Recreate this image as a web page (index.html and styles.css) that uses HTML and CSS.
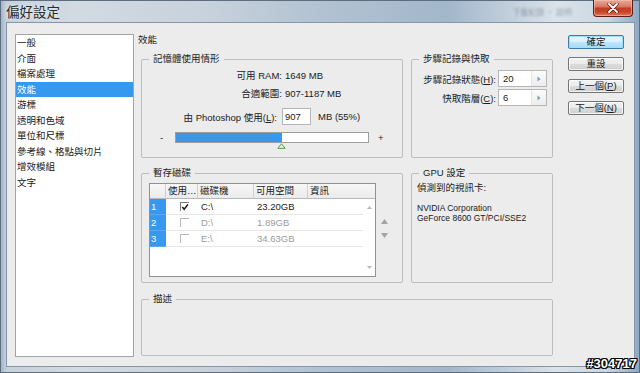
FILE: index.html
```html
<!DOCTYPE html>
<html lang="zh-Hant">
<head>
<meta charset="utf-8">
<title>偏好設定</title>
<link rel="stylesheet" href="styles.css">
</head>
<body>
<div class="window">
  <div class="titlebar">
    <span class="title">偏好設定</span>
    <span class="ghost">下載紀錄 · 說明</span>
    <button class="close" aria-label="關閉">
      <svg width="12" height="10" viewBox="0 0 12 10"><path d="M2 1 L10 9 M10 1 L2 9" stroke="#5a1a12" stroke-width="3.2" stroke-linecap="round"/><path d="M2 1 L10 9 M10 1 L2 9" stroke="#fff" stroke-width="1.8" stroke-linecap="round"/></svg>
    </button>
  </div>

  <div class="client">
    <ul class="sidebar">
      <li>一般</li>
      <li>介面</li>
      <li>檔案處理</li>
      <li class="selected">效能</li>
      <li>游標</li>
      <li>透明和色域</li>
      <li>單位和尺標</li>
      <li>參考線、格點與切片</li>
      <li>增效模組</li>
      <li>文字</li>
    </ul>

    <main class="content">
      <h1 class="page-title">效能</h1>

      <div class="row row-top">
        <section class="group group-memory">
          <span class="legend">記憶體使用情形</span>
          <div class="mem-row mem-first">
            <span class="mem-label">可用 RAM:</span>
            <span class="mem-value">1649 MB</span>
          </div>
          <div class="mem-row">
            <span class="mem-label">合適範圍:</span>
            <span class="mem-value">907-1187 MB</span>
          </div>
          <div class="mem-row mem-input-row">
            <span class="mem-label mem-label-input">由 Photoshop 使用(<u>L</u>):</span>
            <span class="field">907</span>
            <span class="unit">MB (55%)</span>
          </div>
          <div class="slider-row">
            <span class="minus">-</span>
            <div class="slider">
              <div class="fill" style="width:55%"></div>
              <svg class="thumb" width="9" height="6" viewBox="0 0 9 6"><path d="M4.5 0.8 L8.2 5.4 L0.8 5.4 Z" fill="#e3efe0" stroke="#5f9a55" stroke-width="1"/></svg>
            </div>
            <span class="plus">+</span>
          </div>
        </section>

        <section class="group group-history">
          <span class="legend">步驟記錄與快取</span>
          <div class="hist-row hist-first">
            <span class="hist-label">步驟記錄狀態(<u>H</u>):</span>
            <span class="spin"><span class="spin-val">20</span><span class="spin-btn"><svg width="4" height="6" viewBox="0 0 4 6"><path d="M0.5 0.5 L3.5 3 L0.5 5.5 Z" fill="#7d9bbb"/></svg></span></span>
          </div>
          <div class="hist-row">
            <span class="hist-label">快取階層(<u>C</u>):</span>
            <span class="spin"><span class="spin-val">6</span><span class="spin-btn"><svg width="4" height="6" viewBox="0 0 4 6"><path d="M0.5 0.5 L3.5 3 L0.5 5.5 Z" fill="#7d9bbb"/></svg></span></span>
          </div>
        </section>
      </div>

      <div class="row row-mid">
        <section class="group group-scratch">
          <span class="legend">暫存磁碟</span>
          <div class="scratch-body">
            <div class="disk-table">
              <div class="th"></div>
              <div class="th">使用…</div>
              <div class="th">磁碟機</div>
              <div class="th">可用空間</div>
              <div class="th th-last">資訊</div>

              <div class="td num">1</div>
              <div class="td use"><span class="cb cb-on"><svg width="9" height="8" viewBox="0 0 9 8"><path d="M1.5 4 L3.6 6.6 L7.8 1" fill="none" stroke="#1a1a1a" stroke-width="1.7"/></svg></span></div>
              <div class="td">C:\</div>
              <div class="td">23.20GB</div>
              <div class="td"></div>

              <div class="td num">2</div>
              <div class="td use"><span class="cb"></span></div>
              <div class="td off">D:\</div>
              <div class="td off">1.89GB</div>
              <div class="td"></div>

              <div class="td num">3</div>
              <div class="td use"><span class="cb"></span></div>
              <div class="td off">E:\</div>
              <div class="td off">34.63GB</div>
              <div class="td"></div>

              <div class="filler"></div>
              <div class="scroll">
                <svg width="5" height="3" viewBox="0 0 5 3"><path d="M2.5 0 L5 3 L0 3 Z" fill="#b9b9b9"/></svg>
                <svg width="5" height="3" viewBox="0 0 5 3"><path d="M0 0 L5 0 L2.5 3 Z" fill="#b9b9b9"/></svg>
              </div>
            </div>
            <div class="order-arrows">
              <svg width="7" height="5" viewBox="0 0 7 5"><path d="M3.5 0 L7 5 L0 5 Z" fill="#a3a3a3"/></svg>
              <svg width="7" height="5" viewBox="0 0 7 5"><path d="M0 0 L7 0 L3.5 5 Z" fill="#a3a3a3"/></svg>
            </div>
          </div>
        </section>

        <section class="group group-gpu">
          <span class="legend">GPU 設定</span>
          <p class="gpu-title">偵測到的視訊卡:</p>
          <p class="gpu-info">NVIDIA Corporation<br>GeForce 8600 GT/PCI/SSE2</p>
        </section>
      </div>

      <section class="group group-desc">
        <span class="legend">描述</span>
      </section>
    </main>

    <div class="buttons">
      <button class="btn btn-default">確定</button>
      <button class="btn">重設</button>
      <button class="btn">上一個(<u>P</u>)</button>
      <button class="btn">下一個(<u>N</u>)</button>
    </div>
  </div>

  <div class="watermark">#304717</div>
</div>
</body>
</html>
```

FILE: styles.css
```css
* { box-sizing: border-box; }

html, body {
  margin: 0;
  padding: 0;
}

body {
  width: 640px;
  height: 373px;
  overflow: hidden;
  font-family: "Liberation Sans", "Noto Sans CJK TC", sans-serif;
  font-size: 9.5px;
  color: #1a1a1a;
  background: #8fa3b8;
}

.window {
  position: relative;
  width: 640px;
  height: 373px;
  display: flex;
  flex-direction: column;
  background: linear-gradient(90deg, #9fb1c3 0, #c6d1dc 1%, #d2dae2 12%, #c8d2dc 32%, #b2c2d2 50%, #a3b7cb 70%, #c3d0dc 80%, #dae3ea 87%, #cbd6e0 95%, #8ca7c2 100%);
  box-shadow: inset 0 0 0 1px #5d6e80;
}

/* ---------- title bar ---------- */
.titlebar {
  flex: none;
  height: 23px;
  display: flex;
  align-items: flex-start;
}

.title {
  margin: 2px 0 0 6px;
  font-family: "Noto Sans CJK TC", sans-serif;
  font-size: 13.5px;
  line-height: 18px;
  color: #2a2a2a;
  text-shadow: 0 0 5px rgba(255, 255, 255, 0.9);
}

.ghost {
  margin: 7px 21px 0 auto;
  font-family: "Noto Sans CJK TC", sans-serif;
  font-size: 8px;
  line-height: 10px;
  color: rgba(70, 85, 100, 0.45);
  filter: blur(1px);
}

.close {
  width: 40px;
  height: 17px;
  margin: 0 7px 0 0;
  padding: 0;
  border: 1px solid #5a1f17;
  border-top: none;
  border-radius: 0 0 4px 4px;
  background: linear-gradient(#e9a897 0, #d87b66 40%, #c13d24 52%, #c7452b 75%, #e07a58 100%);
  box-shadow: inset 0 0 0 1px rgba(255, 200, 180, 0.55);
  display: flex;
  align-items: center;
  justify-content: center;
}

/* ---------- client area ---------- */
.client {
  flex: 1;
  margin: 0 6px 7px 7px;
  padding: 11px 10px 9px 8px;
  background: #ececec;
  display: flex;
  box-shadow: 0 0 0 1px #8396aa;
}

.sidebar {
  flex: none;
  width: 119px;
  margin: 0;
  padding: 0;
  list-style: none;
  background: #fff;
  border: 1px solid #a3a3a3;
}

.sidebar li {
  height: 15.5px;
  line-height: 15.5px;
  padding-left: 1px;
  white-space: nowrap;
}

.sidebar .selected {
  background: #3798f0;
  color: #fff;
}

.content {
  flex: none;
  width: 415px;
  margin-left: 4px;
  display: flex;
  flex-direction: column;
}

.page-title {
  margin: 0;
  height: 12px;
  font-size: 9.5px;
  font-weight: normal;
  line-height: 12px;
}

.row {
  display: flex;
  gap: 8px;
  margin-left: 3px;
}

.row-top { margin-top: 13px; }
.row-mid { margin-top: 15px; }

/* ---------- group boxes ---------- */
.group {
  border: 1px solid #bdbdbd;
  border-radius: 2px;
}

.legend {
  display: block;
  width: max-content;
  margin: -7px 0 0 7px;
  padding: 0 4px;
  line-height: 12px;
  background: #ececec;
  white-space: nowrap;
}

.group-memory { width: 262px; height: 99px; }
.group-history { width: 142px; height: 99px; }
.group-scratch { width: 262px; height: 110px; }
.group-gpu { width: 142px; height: 110px; }
.group-desc { width: 412px; height: 57px; margin: 16px 0 0 3px; }

/* memory */
.mem-row {
  display: flex;
  align-items: center;
  height: 18px;
  white-space: nowrap;
}

.mem-first { margin-top: 1px; }

.mem-label {
  flex: none;
  width: 140px;
  text-align: right;
}

.mem-value { padding-left: 3px; }

.mem-input-row {
  margin-top: 6px;
  height: 17px;
}

.mem-label-input { padding-right: 5px; }

.field {
  width: 29px;
  height: 17px;
  padding-left: 2px;
  line-height: 15px;
  background: #fff;
  border: 1px solid #b4b6bb;
}

.unit { margin-left: 7px; }

.slider-row {
  display: flex;
  align-items: center;
  height: 11px;
  margin-top: 7px;
  padding-left: 18px;
}

.minus { width: 15px; line-height: 11px; }

.slider {
  position: relative;
  width: 194px;
  height: 11px;
  background: #fff;
  border: 1px solid #9e9e9e;
}

.fill {
  height: 100%;
  background: #3b97ea;
}

.thumb {
  position: absolute;
  left: calc(55% - 5px);
  top: 10px;
}

.plus { margin-left: 9px; line-height: 11px; }

/* history */
.hist-row {
  display: flex;
  align-items: center;
  height: 17px;
  margin-top: 2px;
  white-space: nowrap;
}

.hist-first { margin-top: 5px; }

.hist-label {
  flex: none;
  width: 84px;
  text-align: right;
}

.spin {
  display: flex;
  width: 49px;
  height: 17px;
  margin-left: 2px;
  background: #fff;
  border: 1px solid #b4b6bb;
}

.spin-val {
  flex: 1;
  padding-left: 4px;
  line-height: 15px;
}

.spin-btn {
  width: 15px;
  display: flex;
  align-items: center;
  justify-content: center;
  border-left: 1px solid #e4e4e4;
  background: linear-gradient(#fcfcfc, #ececec);
}

/* scratch disks */
.scratch-body {
  display: flex;
  align-items: flex-start;
  margin: 4px 0 0 7px;
}

.disk-table {
  width: 227px;
  height: 94px;
  border: 1px solid #8f9294;
  background: #fff;
  display: grid;
  grid-template-columns: 16px 32px 56px 54px 55px 12px;
  grid-template-rows: 15px 16px 16px 16px 1fr;
}

.th {
  padding-left: 2px;
  line-height: 14px;
  background: linear-gradient(#f7f7f7, #ebebeb);
  border-right: 1px solid #cfcfcf;
  border-bottom: 1px solid #b9b9b9;
  white-space: nowrap;
  overflow: hidden;
}

.th-last {
  grid-column: 5 / 7;
  border-right: none;
}

.td {
  padding-left: 3px;
  line-height: 15px;
  border-bottom: 1px solid #e6e6e6;
  white-space: nowrap;
}

.td.num {
  padding-left: 1px;
  background: #3798f0;
  color: #fff;
  border-bottom: 1px solid #5aa9f2;
}

.td.use {
  padding-left: 14px;
  display: flex;
  align-items: center;
}

.td.off { color: #9b9b9b; }

.cb {
  width: 9px;
  height: 9px;
  border-top: 1px solid #b8b8b8;
  border-left: 1px solid #b8b8b8;
}

.cb-on {
  border-color: #7a7a7a;
  display: flex;
  align-items: center;
  justify-content: center;
}

.filler { grid-column: 1 / 6; }

.scroll {
  grid-column: 6;
  grid-row: 2 / 6;
  display: flex;
  flex-direction: column;
  align-items: center;
  justify-content: space-between;
  padding: 7px 0 7px;
}

.order-arrows {
  display: flex;
  flex-direction: column;
  gap: 9px;
  margin: 36px 0 0 5px;
}

/* gpu */
.gpu-title {
  margin: 3px 0 0 5px;
  line-height: 12px;
}

.gpu-info {
  margin: 9px 0 0 5px;
  font-size: 8.5px;
  line-height: 10px;
}

/* ---------- buttons ---------- */
.buttons {
  flex: none;
  width: 56px;
  margin-left: 15px;
  padding-top: 1px;
  display: flex;
  flex-direction: column;
  gap: 8px;
}

.btn {
  height: 14px;
  padding: 0;
  font-family: "Liberation Sans", "Noto Sans CJK TC", sans-serif;
  font-size: 9.5px;
  line-height: 12px;
  color: #1a1a1a;
  border: 1px solid #767676;
  border-radius: 2px;
  background: linear-gradient(#f3f3f3 0, #ebebeb 48%, #dcdcdc 52%, #cfcfcf 100%);
  box-shadow: inset 0 0 0 1px rgba(255, 255, 255, 0.7);
}

.btn-default {
  border-color: #3d7db0;
  background: linear-gradient(#eaf6fd 0, #d9f0fc 48%, #bee6fd 52%, #a7d9f5 100%);
  box-shadow: inset 0 0 0 1px #9fe0fb;
}

/* ---------- watermark ---------- */
.watermark {
  position: absolute;
  right: 3px;
  bottom: 2px;
  font-family: "Liberation Sans", sans-serif;
  font-weight: bold;
  font-size: 13px;
  line-height: 15px;
  color: #fff;
  text-shadow: 1px 0 0 #000, -1px 0 0 #000, 0 1px 0 #000, 0 -1px 0 #000, 1px 1px 0 #000, -1px -1px 0 #000, 1px -1px 0 #000, -1px 1px 0 #000;
}
```
